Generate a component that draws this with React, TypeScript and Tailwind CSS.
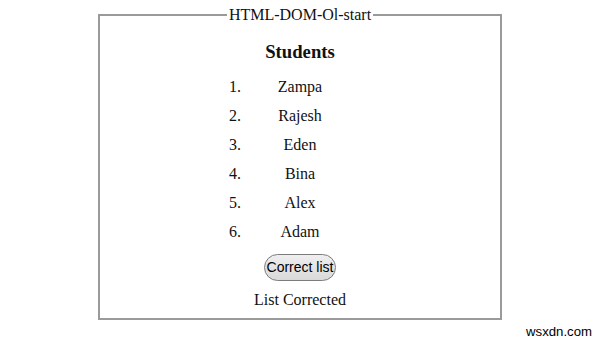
import React from 'react';

const students = ['Zampa', 'Rajesh', 'Eden', 'Bina', 'Alex', 'Adam'];

export default function App() {
  const serif = { fontFamily: '"Liberation Serif", "Times New Roman", serif' };
  return (
    <div className="w-[600px] h-[341px] bg-white text-[#111] overflow-hidden pt-[6px]" style={serif}>
      <fieldset className="ml-[98px] w-[404px] border-2 border-[#9a9a9a] px-2 pb-[6px]">
        <legend className="mx-auto px-[2px] text-[16px] leading-[18px]">HTML-DOM-Ol-start</legend>
        <h3 className="mt-[14px] h-[28px] leading-[28px] text-center text-[18.72px] font-bold">Students</h3>
        <div className="mt-[6px] flex justify-center">
          <ol className="w-[190px] px-[40px] list-decimal text-[16px]">
            {students.map((name) => (
              <li key={name} className="h-[29px] leading-[29px] text-center">
                {name}
              </li>
            ))}
          </ol>
        </div>
        <div className="mt-[8px] flex justify-center">
          <button
            className="h-[27px] px-[2px] rounded-full border border-[#7c7c7c] bg-gradient-to-b from-[#efefef] to-[#d9d9d9] text-[14px] text-black"
            style={{ fontFamily: '"Liberation Sans", Arial, sans-serif' }}
          >
            Correct list
          </button>
        </div>
        <p className="mt-[7px] h-[24px] leading-[24px] text-center text-[16px]">List Corrected</p>
      </fieldset>
      <div className="flex justify-end pr-[8px] pt-[5px]">
        <span className="text-[13.2px] leading-[14px] text-black" style={{ fontFamily: '"Liberation Sans", Arial, sans-serif' }}>
          wsxdn.com
        </span>
      </div>
    </div>
  );
}
